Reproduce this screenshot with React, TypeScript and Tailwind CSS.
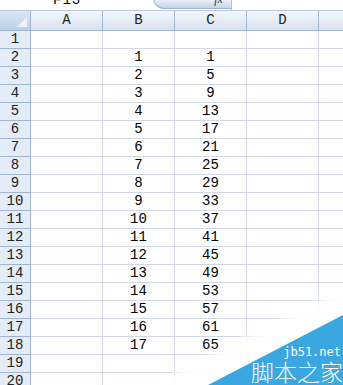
import React from "react";

const cols = ["A", "B", "C", "D"];
const rows = Array.from({ length: 20 }, (_, i) => i + 1);

// values in B and C, starting at row 2
const cellValue = (row: number, col: string) => {
  if (row < 2 || row > 18) return "";
  const n = row - 1;
  if (col === "B") return String(n);
  if (col === "C") return String(4 * n - 3);
  return "";
};

const font = { fontFamily: '"Liberation Mono", "DejaVu Sans Mono", monospace' };

export default function App() {
  return (
    <div className="relative w-[343px] h-[385px] overflow-hidden bg-white" style={font}>
      {/* Formula bar strip (cut off at top) */}
      <div className="flex items-start h-[11px] border-b border-[#b9c9da] bg-white overflow-hidden pl-[53px]">
        <span className="-mt-[7px] text-[14px] leading-none text-black tracking-[1px]">F13</span>
        <span className="ml-[64px] -mt-[4px] text-[6px] leading-none text-[#333]">▼</span>
        <div className="ml-[4px] -mt-[2px] w-[78px] h-[11px] shrink-0 rounded-bl-[12px] border border-r-0 border-[#9fb3cc] bg-gradient-to-b from-[#eef3fa] to-[#c6d4e8] flex justify-end pr-[8px]">
          <span className="-mt-[6px] text-[12px] leading-none italic text-[#333]" style={{ fontFamily: '"Liberation Serif", serif' }}>
            fx
          </span>
        </div>
        <div className="h-full border-l border-[#aebfd3]" />
      </div>

      {/* Column header row */}
      <div className="flex h-[20px] border-b border-[#9eb6ce]">
        <div className="w-[31px] shrink-0 border-r border-[#9eb6ce] bg-gradient-to-b from-[#dbe6f4] to-[#bccfe8] flex items-end justify-end p-[3px]">
          <svg width="10" height="10" viewBox="0 0 10 10">
            <polygon points="10,0 10,10 0,10" fill="#eef3fa" />
          </svg>
        </div>
        {cols.map((c) => (
          <div
            key={c}
            className="w-[72px] shrink-0 border-r border-[#9eb6ce] bg-gradient-to-b from-[#f3f7fc] to-[#d8e2ef] flex items-center justify-center text-[14px] text-[#222]"
          >
            {c}
          </div>
        ))}
        <div className="flex-1 bg-gradient-to-b from-[#f3f7fc] to-[#d8e2ef]" />
      </div>

      {/* Grid rows */}
      {rows.map((r) => (
        <div key={r} className="flex h-[18px]">
          <div className="w-[31px] shrink-0 border-r border-b border-[#9eb6ce] bg-[#e4ecf7] flex items-center justify-center text-[14px] text-[#222]">
            {r}
          </div>
          {cols.map((c) => (
            <div
              key={c}
              className="w-[72px] shrink-0 border-r border-b border-[#d0d7e5] flex items-center justify-center text-[14px] text-black"
            >
              {cellValue(r, c)}
            </div>
          ))}
          <div className="flex-1 border-b border-[#d0d7e5]" />
        </div>
      ))}

      {/* Watermark */}
      <div className="absolute right-0 bottom-0 w-[170px] h-[100px]">
        <svg className="absolute inset-0" width="170" height="100" viewBox="0 0 170 100">
          <defs>
            <linearGradient id="fade" gradientUnits="userSpaceOnUse" x1="100" y1="35" x2="113" y2="61">
              <stop offset="0" stopColor="#ffffff" stopOpacity="0.2" />
              <stop offset="0.3" stopColor="#ffffff" stopOpacity="0.92" />
              <stop offset="1" stopColor="#ffffff" stopOpacity="1" />
            </linearGradient>
          </defs>
          <polygon points="0,85 170,0 170,100 0,100" fill="url(#fade)" />
          <polygon points="35,100 170,30 170,100" fill="#3ba7e0" />
        </svg>
        <div className="absolute right-0 bottom-0 flex flex-col items-end text-white">
          <span className="pr-[2px] text-[12px] leading-none" style={{ fontFamily: '"DejaVu Sans Mono", monospace' }}>
            jb51.net
          </span>
          <span className="text-[23px] leading-[27px] font-light" style={{ fontFamily: '"Noto Sans CJK SC", sans-serif' }}>
            脚本之家
          </span>
        </div>
      </div>
    </div>
  );
}
